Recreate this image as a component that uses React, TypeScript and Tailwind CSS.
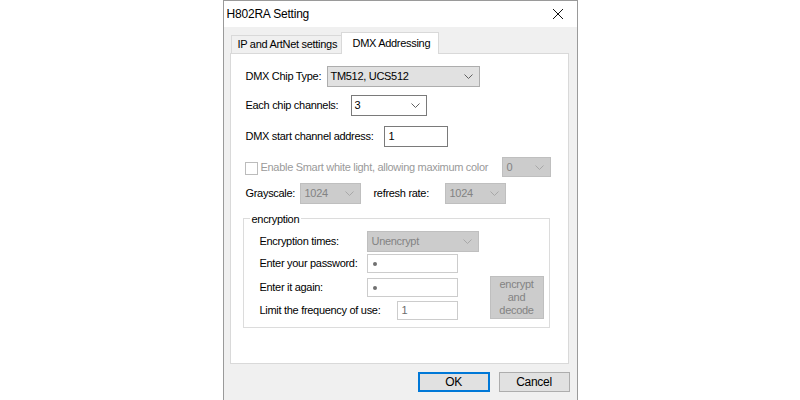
type SelectKind = 'list' | 'edit' | 'off'

function Chevron({ color }: { color: string }) {
  return (
    <svg width="9" height="5" viewBox="0 0 9 5" fill="none">
      <path d="M0.5 0.5 L4.5 4.5 L8.5 0.5" stroke={color} strokeWidth="1" />
    </svg>
  )
}

function Combo({ value, kind, className }: { value: string; kind: SelectKind; className: string }) {
  const look =
    kind === 'list'
      ? 'bg-[#e1e1e1] border-[#adadad] text-black'
      : kind === 'edit'
        ? 'bg-white border-[#7a7a7a] text-black'
        : 'bg-[#cccccc] border-[#bfbfbf] text-[#838383]'
  return (
    <div className={`flex shrink-0 items-center justify-between border pl-[3px] pr-[6px] ${look} ${className}`}>
      <span>{value}</span>
      <Chevron color={kind === 'off' ? '#a8a8a8' : '#606060'} />
    </div>
  )
}

function Field({ value, className, dim }: { value: string; className: string; dim?: boolean }) {
  return (
    <div
      className={`flex shrink-0 items-center border bg-white pl-[4px] ${
        dim ? 'border-[#cccccc] text-[#6d6d6d]' : 'border-[#7a7a7a] text-black'
      } ${className}`}
    >
      {value}
    </div>
  )
}

function Masked({ className }: { className: string }) {
  return (
    <div className={`flex shrink-0 items-center border border-[#cccccc] bg-white pl-[5px] ${className}`}>
      <span className="h-[4px] w-[4px] rounded-full bg-[#707070]" />
    </div>
  )
}

export default function App() {
  return (
    <div
      className="flex h-[400px] w-[800px] justify-center overflow-hidden bg-white text-[11px] tracking-[-0.3px] text-black"
      style={{ fontFamily: '"Liberation Sans", Arial, sans-serif' }}
    >
      <div className="flex h-[400px] w-[355px] flex-col border-x border-t border-[#9a9a9a] bg-[#f0f0f0]">
        {/* title bar */}
        <div className="flex h-[26px] shrink-0 items-center justify-between bg-white pl-[3px] pr-[14px]">
          <span className="text-[12px] tracking-[-0.2px]">H802RA Setting</span>
          <svg width="10" height="10" viewBox="0 0 10 10">
            <path d="M0 0 L10 10 M10 0 L0 10" stroke="#111" strokeWidth="1" />
          </svg>
        </div>

        {/* tabs */}
        <div className="mt-[5px] flex h-[21px] items-end pl-[7px]">
          <div className="flex h-[18px] w-[111px] items-center border border-b-0 border-[#d9d9d9] bg-[#f0f0f0] pl-[6px]">
            IP and ArtNet settings
          </div>
          <div className="relative z-10 -mb-px -ml-px flex h-[22px] w-[98px] items-center border border-b-0 border-[#d9d9d9] bg-white pl-[11px]">
            DMX Addressing
          </div>
        </div>

        {/* panel */}
        <div className="ml-[6px] flex h-[311px] w-[339px] flex-col border border-[#d9d9d9] bg-white pl-[15px]">
          <div className="mt-[12px] flex h-[21px] items-center">
            <span className="w-[81px] shrink-0">DMX Chip Type:</span>
            <Combo value="TM512, UCS512" kind="list" className="h-[21px] w-[153px]" />
          </div>

          <div className="mt-[8px] flex h-[21px] items-center">
            <span className="w-[105px] shrink-0">Each chip channels:</span>
            <Combo value="3" kind="edit" className="h-[21px] w-[76px]" />
          </div>

          <div className="mt-[10px] flex h-[21px] items-center">
            <span className="w-[138px] shrink-0">DMX start channel address:</span>
            <Field value="1" className="h-[21px] w-[64px]" />
          </div>

          <div className="mt-[10px] flex h-[20px] items-center">
            <div className="-ml-px flex w-[257px] shrink-0 items-center text-[#9a9a9a]">
              <span className="mt-[3px] h-[13px] w-[13px] shrink-0 border border-[#bcbcbc] bg-white" />
              <span className="ml-[3px]">Enable Smart white light, allowing maximum color</span>
            </div>
            <Combo value="0" kind="off" className="h-[20px] w-[49px] pl-[4px]" />
          </div>

          <div className="mt-[6px] flex h-[21px] items-center">
            <span className="w-[54px] shrink-0">Grayscale:</span>
            <Combo value="1024" kind="off" className="h-[21px] w-[61px] pl-[4px]" />
            <span className="ml-[13px] w-[71px] shrink-0">refresh rate:</span>
            <Combo value="1024" kind="off" className="h-[21px] w-[61px] pl-[4px]" />
          </div>

          {/* encryption group */}
          <div className="relative -ml-[3px] mt-[14px] flex h-[110px] w-[307px] border border-[#dcdcdc]">
            <span className="absolute -top-[8px] left-[6px] bg-white px-[2px]">encryption</span>
            <div className="flex w-[235px] shrink-0 flex-col pl-[16px] pt-[12px]">
              <div className="flex h-[21px] items-center">
                <span className="w-[107px] shrink-0">Encryption times:</span>
                <Combo value="Unencrypt" kind="off" className="h-[21px] w-[112px] pl-[4px]" />
              </div>
              <div className="mt-[2px] flex h-[19px] items-center">
                <span className="w-[107px] shrink-0">Enter your password:</span>
                <Masked className="h-[19px] w-[91px]" />
              </div>
              <div className="mt-[5px] flex h-[19px] items-center">
                <span className="w-[107px] shrink-0">Enter it again:</span>
                <Masked className="h-[19px] w-[91px]" />
              </div>
              <div className="mt-[4px] flex h-[19px] items-center">
                <span className="w-[137px] shrink-0">Limit the frequency of use:</span>
                <Field value="1" dim className="h-[19px] w-[61px]" />
              </div>
            </div>
            <div className="ml-[11px] mt-[57px] flex h-[43px] w-[54px] items-center justify-center border border-[#bfbfbf] bg-[#cccccc] text-center leading-[13px] text-[#838383]">
              encrypt
              <br />
              and
              <br />
              decode
            </div>
          </div>
        </div>

        {/* dialog buttons */}
        <div className="mt-[8px] flex justify-end gap-[9px] pr-[7px]">
          <div className="flex h-[20px] w-[72px] items-center justify-center border-2 border-[#0078d7] bg-[#e1e1e1] text-[12px]">
            OK
          </div>
          <div className="flex h-[20px] w-[71px] items-center justify-center border border-[#adadad] bg-[#e1e1e1] text-[12px]">
            Cancel
          </div>
        </div>
      </div>
    </div>
  )
}
